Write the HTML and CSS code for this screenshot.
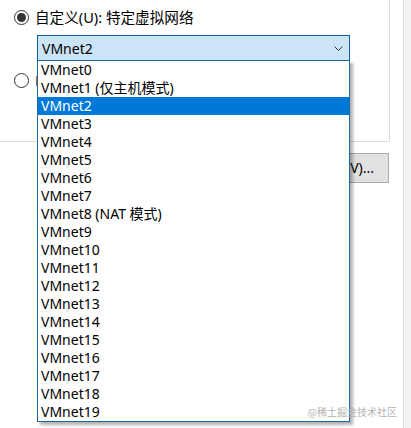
FILE: index.html
```html
<!DOCTYPE html>
<html lang="zh-CN">
<head>
<meta charset="utf-8">
<title>网络连接</title>
<link rel="stylesheet" href="styles.css">
</head>
<body>
<div class="dialog">
  <div class="main">
    <div class="group">
      <div class="radio-row">
        <span class="radio checked"></span>
        <span class="label">自定义(U): 特定虚拟网络</span>
      </div>
      <div class="combo">
        <span class="combo-value">VMnet2</span>
        <svg class="chevron" width="9" height="5" viewBox="0 0 9 5"><path d="M0.5 0.5 L4.5 4.5 L8.5 0.5" fill="none" stroke="#333" stroke-width="1"/></svg>
      </div>
      <div class="radio-row second">
        <span class="radio"></span>
        <span class="label">LAN 区段(L):</span>
      </div>
    </div>
    <div class="actions">
      <button class="btn">高级(V)...</button>
    </div>
    <ul class="dropdown">
      <li>VMnet0</li>
      <li>VMnet1 (仅主机模式)</li>
      <li class="selected">VMnet2</li>
      <li>VMnet3</li>
      <li>VMnet4</li>
      <li>VMnet5</li>
      <li>VMnet6</li>
      <li>VMnet7</li>
      <li>VMnet8 (NAT 模式)</li>
      <li>VMnet9</li>
      <li>VMnet10</li>
      <li>VMnet11</li>
      <li>VMnet12</li>
      <li>VMnet13</li>
      <li>VMnet14</li>
      <li>VMnet15</li>
      <li>VMnet16</li>
      <li>VMnet17</li>
      <li>VMnet18</li>
      <li>VMnet19</li>
    </ul>
    <div class="watermark">@稀土掘金技术社区</div>
  </div>
  <div class="strip"></div>
</div>
</body>
</html>
```
FILE: styles.css
```css
* { box-sizing: border-box; }
html, body {
  margin: 0;
  padding: 0;
  width: 411px;
  height: 428px;
  overflow: hidden;
  background: #ffffff;
  font-family: "Noto Sans", "Noto Sans CJK SC", sans-serif;
  font-size: 14px;
  color: #000;
}
.dialog {
  display: flex;
  width: 411px;
  height: 428px;
}
.main {
  position: relative;
  width: 404px;
  height: 428px;
  border-right: 1px solid #dedede;
  background: #fff;
}
.strip {
  flex: 1;
  background: #f2f2f2;
}
.group {
  width: 390px;
  height: 142px;
  border-right: 1px solid #dcdcdc;
  border-bottom: 1px solid #dcdcdc;
  padding: 10px 0 0 14px;
}
.radio-row {
  display: flex;
  align-items: center;
  height: 15px;
  gap: 6px;
}
.radio-row.second {
  margin-top: 12px;
}
.label {
  font-size: 14.6px;
  line-height: 15px;
  white-space: nowrap;
}
.radio {
  width: 15px;
  height: 15px;
  border: 1px solid #333;
  border-radius: 50%;
  display: inline-flex;
  align-items: center;
  justify-content: center;
  background: #fff;
  flex: none;
}
.radio.checked::after {
  content: "";
  width: 9px;
  height: 9px;
  border-radius: 50%;
  background: #333;
}
.combo {
  margin: 10px 0 0 23px;
  width: 313px;
  height: 26px;
  border: 1px solid #0f5fa6;
  background: #cce4f7;
  display: flex;
  align-items: center;
  justify-content: space-between;
  padding: 0 6px 0 4px;
}
.combo-value {
  line-height: 18px;
  padding-top: 1px;
}
.chevron {
  display: block;
  margin-top: 1px;
}
.actions {
  width: 390px;
  display: flex;
  justify-content: flex-end;
  padding-top: 11px;
  padding-right: 1px;
}
.btn {
  width: 92px;
  height: 30px;
  border: 1px solid #adadad;
  background: #e1e1e1;
  font-family: inherit;
  font-size: 14px;
  color: #000;
  padding: 0 0 2px 6px;
}
.dropdown {
  position: absolute;
  left: 37px;
  top: 60px;
  width: 313px;
  margin: 0;
  padding: 0;
  list-style: none;
  border: 1px solid #1c69a8;
  background: #fff;
  box-shadow: 3px 3px 3px rgba(0, 0, 0, 0.3);
}
.dropdown li {
  height: 18px;
  line-height: 18px;
  padding-left: 3px;
  white-space: nowrap;
}
.dropdown li.selected {
  background: #0078d7;
  color: #fff;
}
.watermark {
  position: absolute;
  right: 6px;
  top: 405px;
  font-size: 10px;
  line-height: 13px;
  color: #b3b3b3;
  font-family: "Noto Sans CJK SC", sans-serif;
}
```
